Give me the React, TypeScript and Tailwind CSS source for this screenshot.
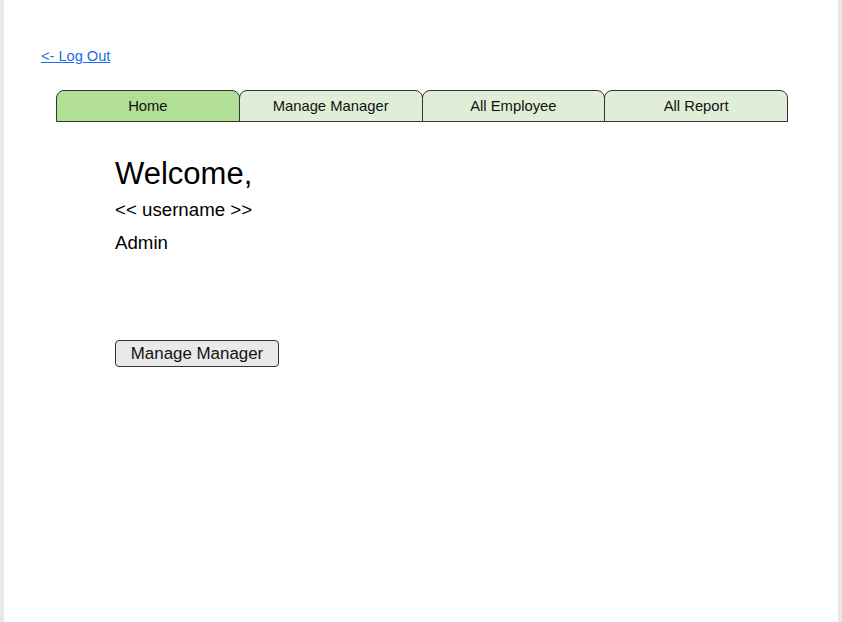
export default function App() {
  const tabs = ["Home", "Manage Manager", "All Employee", "All Report"];
  return (
    <div className="h-[622px] w-[842px] flex bg-white" style={{ fontFamily: '"Liberation Sans", Arial, sans-serif' }}>
      <div className="w-[4px] bg-[#e8e8e8]" />
      <div className="flex-1">
        <div className="pt-[44px] pl-[37px]">
          <a href="#" className="text-[14.6px] leading-[20px] text-[#1a6ee8] underline">
            &lt;- Log Out
          </a>
        </div>
        <div className="mt-[22px] ml-[52px] w-[732px] flex">
          {tabs.map((t, i) => (
            <div
              key={t}
              className={
                "flex-1 h-[32px] border border-[#333] rounded-t-[8px] text-[14.8px] text-[#111] flex items-center justify-center " +
                (i === 0 ? "bg-[#b0df95]" : "bg-[#e0edd7]") +
                (i > 0 ? " -ml-px" : "")
              }
            >
              {t}
            </div>
          ))}
        </div>
        <div className="pl-[111px] pt-[34px]">
          <div className="text-[31px] leading-[36px] text-black">Welcome,</div>
          <div className="mt-[7px] text-[18.7px] leading-[22px] text-black">&lt;&lt; username &gt;&gt;</div>
          <div className="mt-[11px] text-[18.7px] leading-[22px] text-black">Admin</div>
          <button className="mt-[86px] w-[164px] h-[27px] rounded-[4px] border border-[#333] bg-[#e9e9e9] text-[16.9px] text-[#111] flex items-center justify-center">
            Manage Manager
          </button>
        </div>
      </div>
      <div className="w-[4px] bg-[#e8e8e8]" />
    </div>
  );
}
